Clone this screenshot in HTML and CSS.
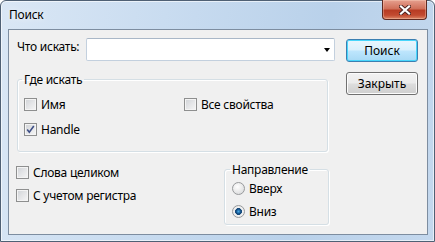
FILE: index.html
```html
<!DOCTYPE html>
<html>
<head>
  <title>Поиск</title>
  <link rel="stylesheet" href="styles.css">
</head>
<body>
  <div class="window">
    <div class="titlebar">
      <span class="title">Поиск</span>
      <button class="close-button" title="Закрыть">
        <svg width="12" height="10" viewBox="0 0 12 10">
          <path d="M2 1.5 L10 8.5 M10 1.5 L2 8.5" stroke="#4b2320" stroke-width="4" stroke-linecap="square"/>
          <path d="M2 1.5 L10 8.5 M10 1.5 L2 8.5" stroke="#ffffff" stroke-width="2.2" stroke-linecap="square"/>
        </svg>
      </button>
    </div>

    <div class="client">
      <div class="main">
        <div class="search-row">
          <label class="search-label">Что искать:</label>
          <div class="combo">
            <input type="text" class="combo-input">
            <span class="combo-arrow"></span>
          </div>
        </div>

        <fieldset class="group where-group">
          <legend>Где искать</legend>
          <label class="check"><span class="box"></span>Имя</label>
          <label class="check"><span class="box"></span>Все свойства</label>
          <label class="check">
            <span class="box">
              <svg width="11" height="11" viewBox="0 0 11 11">
                <path d="M2.2 5.6 L4.3 8.2 L8.8 2" fill="none" stroke="#3e4f86" stroke-width="1.6"/>
              </svg>
            </span>Handle
          </label>
        </fieldset>

        <div class="bottom">
          <div class="options">
            <label class="check"><span class="box"></span>Слова целиком</label>
            <label class="check"><span class="box"></span>С учетом регистра</label>
          </div>
          <fieldset class="group direction-group">
            <legend>Направление</legend>
            <label class="radio"><span class="dot"></span>Вверх</label>
            <label class="radio"><span class="dot checked"></span>Вниз</label>
          </fieldset>
        </div>
      </div>

      <div class="side">
        <button class="btn btn-default">Поиск</button>
        <button class="btn">Закрыть</button>
      </div>
    </div>
  </div>
</body>
</html>
```

FILE: styles.css
```css
* {
  margin: 0;
  padding: 0;
  box-sizing: border-box;
}

html, body {
  width: 100%;
  height: 100%;
  background: #ffffff;
  overflow: hidden;
}

body {
  font-family: 'Noto Sans', 'Open Sans', sans-serif;
  font-size: 12px;
  letter-spacing: -0.25px;
  color: #000;
}

.window {
  width: 435px;
  height: 242px;
  display: flex;
  flex-direction: column;
  border: 1px solid #4f6074;
  border-radius: 6px 6px 0 0;
  background: linear-gradient(100deg, #dae7f5 0%, #c9dcf0 35%, #b9d1ea 70%, #c4d8ee 100%);
  box-shadow: inset 0 0 0 1px rgba(255, 255, 255, 0.6);
}

.titlebar {
  flex: 0 0 28px;
  display: flex;
  justify-content: space-between;
  align-items: flex-start;
}

.title {
  padding: 6px 0 0 8px;
  line-height: 16px;
  text-shadow: 0 0 6px rgba(255, 255, 255, 0.9);
}

.close-button {
  width: 45px;
  height: 20px;
  margin: -1px 7px 0 0;
  border: 1px solid #5f2a22;
  border-top: none;
  border-radius: 0 0 4px 4px;
  background: linear-gradient(#e6a08f 0%, #d0705a 45%, #b83c24 55%, #c24a30 80%, #dc8566 100%);
  box-shadow: inset 0 0 0 1px rgba(255, 220, 200, 0.35);
  display: flex;
  align-items: center;
  justify-content: center;
}

.close-button svg {
  display: block;
}

.client {
  flex: 1;
  margin: 0 6px 6px 7px;
  border: 1px solid #7d8da0;
  background: #f0f0f0;
  display: flex;
  padding: 8px 9px 0 8px;
}

.main {
  width: 318px;
}

.search-row {
  display: flex;
  height: 23px;
}

.search-label {
  width: 69px;
  line-height: 16px;
  padding-top: 1px;
}

.combo {
  width: 250px;
  height: 23px;
  display: flex;
  align-items: center;
  background: #ffffff;
  border: 1px solid #c3d0de;
  border-top-color: #a9b7c7;
  border-radius: 2px;
}

.combo-input {
  flex: 1;
  min-width: 0;
  height: 100%;
  border: none;
  outline: none;
  background: transparent;
  font: inherit;
  padding: 0 4px;
}

.combo-arrow {
  width: 0;
  height: 0;
  margin: 1px 4px 0 4px;
  border-left: 3.5px solid transparent;
  border-right: 3.5px solid transparent;
  border-top: 4px solid #000;
}

.group {
  border: 1px solid #d5dfe5;
  border-radius: 3px;
  box-shadow: inset 1px 1px 0 #ffffff, 1px 1px 0 #ffffff;
}

.group legend {
  margin-left: -2px;
  padding: 0 2px;
  line-height: 15px;
}

.where-group {
  width: 311px;
  margin-top: 11px;
  padding: 9px 0 13px 6px;
  display: grid;
  grid-template-columns: 160px 1fr;
  grid-auto-rows: 17px;
  row-gap: 8px;
}

.check,
.radio {
  display: flex;
  align-items: center;
  gap: 4px;
  line-height: 17px;
  height: 17px;
  white-space: nowrap;
}

.box {
  flex: 0 0 13px;
  width: 13px;
  height: 13px;
  border: 1px solid #8e8f8f;
  background: linear-gradient(135deg, #cfd2d6 0%, #e4e5e7 50%, #f6f6f6 100%);
  box-shadow: inset 0 0 0 1px #f4f4f4;
  display: flex;
  align-items: center;
  justify-content: center;
}

.box svg {
  display: block;
}

.bottom {
  display: flex;
  align-items: flex-start;
  margin-top: 10px;
}

.options {
  margin: 2px 0 0 -1px;
  display: flex;
  flex-direction: column;
  gap: 6px;
}

.direction-group {
  width: 105px;
  margin: 0 6px 0 auto;
  padding: 3px 0 4px 7px;
  display: flex;
  flex-direction: column;
  gap: 6px;
}

.dot {
  flex: 0 0 13px;
  width: 13px;
  height: 13px;
  border-radius: 50%;
  border: 1px solid #989a9c;
  background: radial-gradient(circle at 40% 35%, #ffffff 0%, #eeeeee 40%, #d2d4d6 100%);
}

.dot.checked {
  background: radial-gradient(circle at 50% 50%, #4aa6e0 0, #1f6fae 1.6px, #123f6e 2.6px, #1b4f80 3.2px, #f2f2f2 3.7px, #e2e3e4 100%);
}

.side {
  margin-left: 11px;
  padding-top: 1px;
  display: flex;
  flex-direction: column;
  gap: 10px;
}

.btn {
  width: 72px;
  height: 23px;
  border: 1px solid #707070;
  border-radius: 3px;
  background: linear-gradient(#f2f2f2 0%, #ebebeb 48%, #dddddd 52%, #cfcfcf 100%);
  box-shadow: inset 0 0 0 1px #fcfcfc;
  font: inherit;
  color: #000;
}

.btn-default {
  border-color: #3c7fb1;
  background: linear-gradient(#eaf6fd 0%, #d9f0fc 48%, #bee6fd 52%, #a7d9f5 100%);
  box-shadow: inset 0 0 0 1px #48d6fb;
}
```
